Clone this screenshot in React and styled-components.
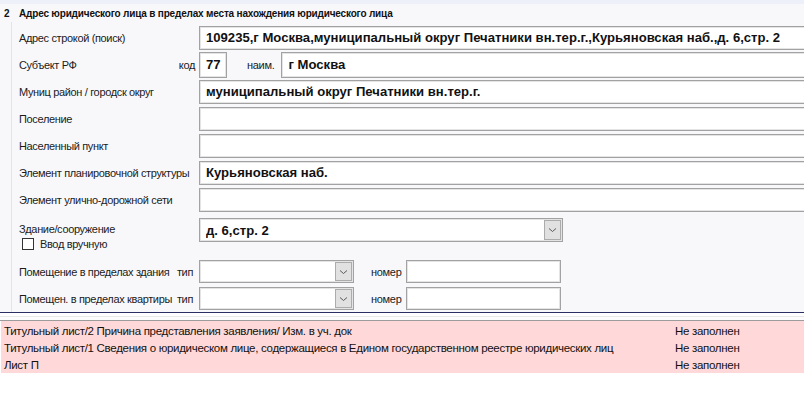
import React from "react";
import styled, { createGlobalStyle } from "styled-components";

const Global = createGlobalStyle`
  html, body { margin: 0; padding: 0; background: #fff; }
  body { font-family: "Liberation Sans", Arial, sans-serif; color: #1b1b1b; }
`;

const Page = styled.div`
  width: 804px;
  height: 394px;
  overflow: hidden;
  background: #fff;
`;

const Panel = styled.div`
  background: #f8f8fb;
  border-top: 4px solid #eef0f9;
  border-bottom: 1px solid #2b2f66;
  overflow: hidden;
`;

const Heading = styled.div`
  display: flex;
  align-items: center;
  height: 18px;
  font-size: 10px;
  letter-spacing: -0.18px;
  font-weight: bold;
  color: #111;
`;

const Num = styled.span`
  width: 19px;
  padding-left: 4px;
  box-sizing: border-box;
`;

const Body = styled.div`
  margin-left: 11px;
  border-left: 1px solid #e0e4ef;
  padding: 2px 0 0 7px;
`;

const Row = styled.div`
  display: flex;
  align-items: center;
  height: 27px;
`;

const Label = styled.div`
  width: 180px;
  flex: none;
  display: flex;
  justify-content: space-between;
  padding-right: ${(p) => p.pr ?? 0}px;
  box-sizing: border-box;
  font-size: 11px;
  letter-spacing: -0.35px;
  white-space: nowrap;
`;

const Caption = styled.span`
  font-size: 11px;
  letter-spacing: -0.3px;
  white-space: nowrap;
  margin: 0 ${(p) => p.mr || 0}px 0 ${(p) => p.ml || 0}px;
`;

const Field = styled.div`
  height: ${(p) => p.h || 24}px;
  width: ${(p) => (p.w ? `${p.w}px` : "auto")};
  flex: ${(p) => (p.w ? "none" : "1")};
  margin-right: ${(p) => (p.w ? 0 : -20)}px;
  box-sizing: border-box;
  background: #fff;
  border: 1px solid #a2a2a2;
  box-shadow: inset 0 0 0 1px #e4e4e4;
  display: flex;
  align-items: center;
  padding-left: 6px;
  font-size: 13.1px;
  font-weight: bold;
  color: #111;
  white-space: nowrap;
  overflow: hidden;
`;

const Value = styled.span`
  flex: 1;
  overflow: hidden;
`;

const DropButton = styled.div`
  width: 17px;
  height: ${(p) => p.h || 20}px;
  margin-right: 1px;
  flex: none;
  box-sizing: border-box;
  background: #e1e1e1;
  border: 1px solid #acacac;
  display: flex;
  align-items: center;
  justify-content: center;
`;

const Chevron = () => (
  <svg width="9" height="6" viewBox="0 0 9 6">
    <path d="M1 1.5 L4.5 4.5 L8 1.5" fill="none" stroke="#5a5a5a" strokeWidth="1" />
  </svg>
);

const BuildBlock = styled.div`
  display: flex;
  height: 45px;
`;

const BuildLeft = styled.div`
  width: 180px;
  flex: none;
  display: flex;
  flex-direction: column;
  padding-top: 10px;
  font-size: 11px;
  letter-spacing: -0.35px;
`;

const Check = styled.label`
  display: flex;
  align-items: center;
  gap: 6px;
  margin: 3px 0 0 3px;
`;

const Box = styled.span`
  width: 12px;
  height: 12px;
  box-sizing: border-box;
  border: 1px solid #333;
  background: #fff;
`;

const BuildField = styled.div`
  padding-top: 5px;
`;

const Gap = styled.div`
  height: 7px;
  background: #fcfcfd;
  border-bottom: 1px solid #9c9c9c;
  box-shadow: inset 0 3px 0 #fff, inset 0 4px 0 #e8e8e8;
`;

const List = styled.div`
  background: #ffd9d9;
  margin-left: 1px;
  padding-top: 1px;
`;

const ListRow = styled.div`
  display: grid;
  grid-template-columns: 671px 1fr;
  height: 17px;
  align-items: center;
  padding-left: 3px;
  font-size: 11.5px;
  letter-spacing: -0.3px;
  color: #111;
  white-space: nowrap;
`;

const issues = [
  ["Титульный лист/2 Причина представления заявления/ Изм. в уч. док", "Не заполнен"],
  [
    "Титульный лист/1 Сведения о юридическом лице, содержащиеся в Едином государственном реестре юридических лиц",
    "Не заполнен",
  ],
  ["Лист П", "Не заполнен"],
];

const TextRow = ({ label, value }) => (
  <Row>
    <Label>{label}</Label>
    <Field>{value}</Field>
  </Row>
);

const RoomRow = ({ label }) => (
  <Row>
    <Label pr={6}>
      <span>{label}</span>
      <span>тип</span>
    </Label>
    <Field w={155} h={23}>
      <Value />
      <DropButton h={19}>
        <Chevron />
      </DropButton>
    </Field>
    <Caption ml={17} mr={4}>номер</Caption>
    <Field w={155} h={23} />
  </Row>
);

export default function App() {
  return (
    <Page>
      <Global />
      <Panel>
        <Heading>
          <Num>2</Num>
          Адрес юридического лица в пределах места нахождения юридического лица
        </Heading>
        <Body>
          <TextRow
            label="Адрес строкой (поиск)"
            value="109235,г Москва,муниципальный округ Печатники вн.тер.г.,Курьяновская наб.,д. 6,стр. 2"
          />
          <Row>
            <Label pr={4}>
              <span>Субъект РФ</span>
              <span>код</span>
            </Label>
            <Field w={28} h={26}>77</Field>
            <Caption ml={20} mr={7}>наим.</Caption>
            <Field h={26}>г Москва</Field>
          </Row>
          <TextRow label="Муниц район / городск округ" value="муниципальный округ Печатники вн.тер.г." />
          <TextRow label="Поселение" />
          <TextRow label="Населенный пункт" />
          <TextRow label="Элемент планировочной структуры" value="Курьяновская наб." />
          <TextRow label="Элемент улично-дорожной сети" />
          <BuildBlock>
            <BuildLeft>
              <span>Здание/сооружение</span>
              <Check>
                <Box />
                Ввод вручную
              </Check>
            </BuildLeft>
            <BuildField>
              <Field w={364}>
                <Value>д. 6,стр. 2</Value>
                <DropButton>
                  <Chevron />
                </DropButton>
              </Field>
            </BuildField>
          </BuildBlock>
          <RoomRow label="Помещение в пределах здания" />
          <RoomRow label="Помещен. в пределах квартиры" />
        </Body>
      </Panel>
      <Gap />
      <List>
        {issues.map(([name, state]) => (
          <ListRow key={name}>
            <span>{name}</span>
            <span>{state}</span>
          </ListRow>
        ))}
      </List>
    </Page>
  );
}
